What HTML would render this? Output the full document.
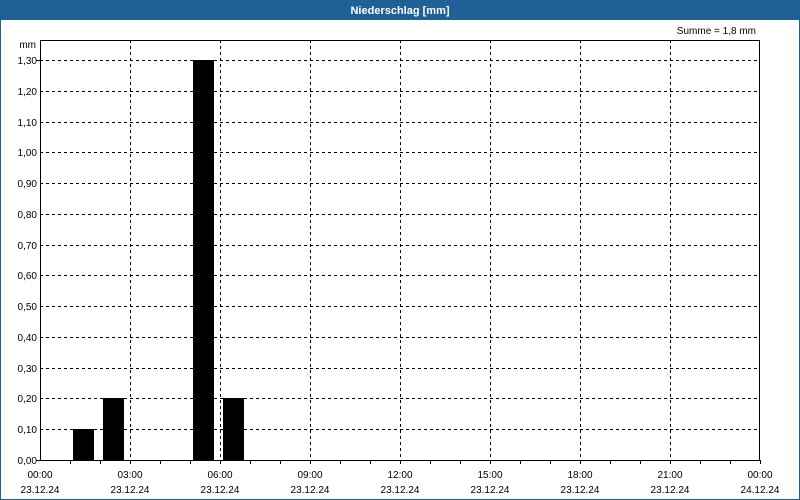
<!DOCTYPE html>
<html><head><meta charset="utf-8"><style>
html,body{margin:0;padding:0;width:800px;height:500px;overflow:hidden;background:#fff}
</style></head><body>
<svg width="800" height="500" xmlns="http://www.w3.org/2000/svg" font-family="Liberation Sans, sans-serif" font-size="10">
<rect x="0" y="0" width="800" height="500" fill="#fff"/>
<rect x="0.5" y="0.5" width="799" height="499" fill="none" stroke="#1f6096"/>
<rect x="0" y="0" width="800" height="20" fill="#1f6096"/>
<text x="400" y="14" fill="#fff" font-weight="bold" font-size="11" text-anchor="middle">Niederschlag [mm]</text>
<text x="756" y="34" text-anchor="end" fill="#000">Summe = 1,8 mm</text>
<text x="36" y="48" text-anchor="end" fill="#000">mm</text>
<g stroke="#000" stroke-dasharray="3,3" stroke-width="1">
<line x1="40" x2="760" y1="60.5" y2="60.5"/>
<line x1="40" x2="760" y1="91.5" y2="91.5"/>
<line x1="40" x2="760" y1="122.5" y2="122.5"/>
<line x1="40" x2="760" y1="152.5" y2="152.5"/>
<line x1="40" x2="760" y1="183.5" y2="183.5"/>
<line x1="40" x2="760" y1="214.5" y2="214.5"/>
<line x1="40" x2="760" y1="245.5" y2="245.5"/>
<line x1="40" x2="760" y1="275.5" y2="275.5"/>
<line x1="40" x2="760" y1="306.5" y2="306.5"/>
<line x1="40" x2="760" y1="337.5" y2="337.5"/>
<line x1="40" x2="760" y1="368.5" y2="368.5"/>
<line x1="40" x2="760" y1="398.5" y2="398.5"/>
<line x1="40" x2="760" y1="429.5" y2="429.5"/>
<line x1="130.5" x2="130.5" y1="40" y2="460"/>
<line x1="220.5" x2="220.5" y1="40" y2="460"/>
<line x1="310.5" x2="310.5" y1="40" y2="460"/>
<line x1="400.5" x2="400.5" y1="40" y2="460"/>
<line x1="490.5" x2="490.5" y1="40" y2="460"/>
<line x1="580.5" x2="580.5" y1="40" y2="460"/>
<line x1="670.5" x2="670.5" y1="40" y2="460"/>
</g>
<g fill="#000">
<rect x="73" y="429" width="21" height="31"/>
<rect x="103" y="398" width="21" height="62"/>
<rect x="193" y="60" width="21" height="400"/>
<rect x="223" y="398" width="21" height="62"/>
</g>
<rect x="40.5" y="40.5" width="719" height="420" fill="none" stroke="#000"/>
<g stroke="#000">
<line x1="70.5" x2="70.5" y1="460" y2="464"/><line x1="100.5" x2="100.5" y1="460" y2="464"/><line x1="130.5" x2="130.5" y1="460" y2="464"/>
<line x1="160.5" x2="160.5" y1="460" y2="464"/><line x1="190.5" x2="190.5" y1="460" y2="464"/><line x1="220.5" x2="220.5" y1="460" y2="464"/>
<line x1="250.5" x2="250.5" y1="460" y2="464"/><line x1="280.5" x2="280.5" y1="460" y2="464"/><line x1="310.5" x2="310.5" y1="460" y2="464"/>
<line x1="340.5" x2="340.5" y1="460" y2="464"/><line x1="370.5" x2="370.5" y1="460" y2="464"/><line x1="400.5" x2="400.5" y1="460" y2="464"/>
<line x1="430.5" x2="430.5" y1="460" y2="464"/><line x1="460.5" x2="460.5" y1="460" y2="464"/><line x1="490.5" x2="490.5" y1="460" y2="464"/>
<line x1="520.5" x2="520.5" y1="460" y2="464"/><line x1="550.5" x2="550.5" y1="460" y2="464"/><line x1="580.5" x2="580.5" y1="460" y2="464"/>
<line x1="610.5" x2="610.5" y1="460" y2="464"/><line x1="640.5" x2="640.5" y1="460" y2="464"/><line x1="670.5" x2="670.5" y1="460" y2="464"/>
<line x1="700.5" x2="700.5" y1="460" y2="464"/><line x1="730.5" x2="730.5" y1="460" y2="464"/><line x1="760.5" x2="760.5" y1="460" y2="464"/>
<line x1="36" x2="40" y1="60.5" y2="60.5"/><line x1="36" x2="40" y1="460.5" y2="460.5"/>
</g>
<g text-anchor="end" fill="#000">
<text x="37" y="64">1,30</text><text x="37" y="95">1,20</text><text x="37" y="126">1,10</text>
<text x="37" y="156">1,00</text><text x="37" y="187">0,90</text><text x="37" y="218">0,80</text>
<text x="37" y="249">0,70</text><text x="37" y="279">0,60</text><text x="37" y="310">0,50</text>
<text x="37" y="341">0,40</text><text x="37" y="372">0,30</text><text x="37" y="402">0,20</text>
<text x="37" y="433">0,10</text><text x="37" y="464">0,00</text>
</g>
<g text-anchor="middle" fill="#000">
<text x="40" y="478">00:00</text><text x="130" y="478">03:00</text><text x="220" y="478">06:00</text>
<text x="310" y="478">09:00</text><text x="400" y="478">12:00</text><text x="490" y="478">15:00</text>
<text x="580" y="478">18:00</text><text x="670" y="478">21:00</text><text x="760" y="478">00:00</text>
<text x="40" y="493">23.12.24</text><text x="130" y="493">23.12.24</text><text x="220" y="493">23.12.24</text>
<text x="310" y="493">23.12.24</text><text x="400" y="493">23.12.24</text><text x="490" y="493">23.12.24</text>
<text x="580" y="493">23.12.24</text><text x="670" y="493">23.12.24</text><text x="760" y="493">24.12.24</text>
</g>
</svg>
</body></html>
